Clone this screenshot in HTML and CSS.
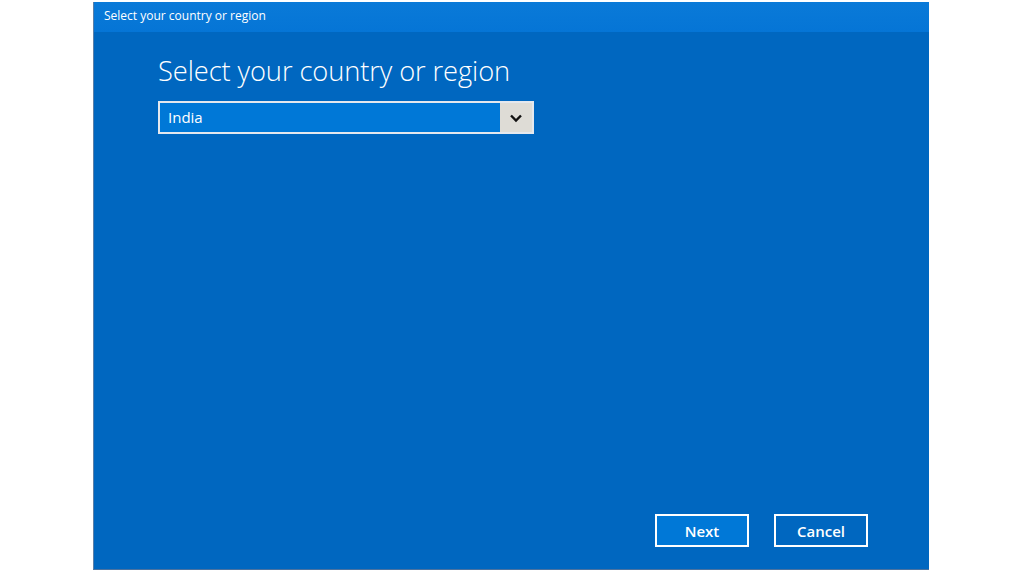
FILE: index.html
```html
<!DOCTYPE html>
<html>
<head>
<meta charset="utf-8">
<link rel="stylesheet" href="styles.css">
</head>
<body>
<div class="stage">
  <div class="window">
    <div class="titlebar">Select your country or region</div>
    <div class="content">
      <h1 class="heading">Select your country or region</h1>
      <div class="select">
        <div class="select-value">India</div>
        <div class="select-arrow">
          <svg width="14" height="10" viewBox="0 0 14 10"><path d="M2 2.5 L7 7.5 L12 2.5" fill="none" stroke="#111" stroke-width="2.4"/></svg>
        </div>
      </div>
      <div class="spacer"></div>
      <div class="actions">
        <button class="btn btn-primary">Next</button>
        <button class="btn">Cancel</button>
      </div>
    </div>
  </div>
</div>
</body>
</html>
```

FILE: styles.css
```css
html, body {
  margin: 0;
  padding: 0;
  background: #ffffff;
  width: 1024px;
  height: 572px;
  overflow: hidden;
  font-family: "Open Sans", "Noto Sans", sans-serif;
}
.stage {
  display: flex;
  justify-content: flex-start;
  padding: 2px 0 0 93px;
  height: 570px;
  box-sizing: border-box;
}
.window {
  width: 836px;
  height: 568px;
  display: flex;
  flex-direction: column;
  background: #0067c0;
  border-left: 1px solid #5b7fa8;
  border-bottom: 1px solid #4a72a0;
  box-sizing: border-box;
}
.titlebar {
  height: 30px;
  background: linear-gradient(#0a7ad8, #0575d6);
  color: #ffffff;
  font-size: 12px;
  line-height: 28px;
  padding-left: 10px;
  flex: none;
}
.content {
  flex: 1;
  display: flex;
  flex-direction: column;
  padding: 20px 61px 22px 64px;
}
.heading {
  margin: 0;
  font-weight: 300;
  font-size: 27.3px;
  line-height: 38px;
  color: #ffffff;
  letter-spacing: -0.1px;
}
.select {
  margin-top: 11px;
  width: 376px;
  height: 33px;
  box-sizing: border-box;
  border: 2px solid #e4e8ee;
  display: flex;
  background: #0078d7;
}
.select-value {
  flex: 1;
  color: #ffffff;
  font-size: 15px;
  line-height: 28px;
  padding-left: 8px;
}
.select-arrow {
  width: 32px;
  background: #dedcd6;
  display: flex;
  align-items: center;
  justify-content: center;
}
.spacer { flex: 1; }
.actions {
  display: flex;
  justify-content: flex-end;
  gap: 25px;
}
.btn {
  width: 94px;
  height: 33px;
  box-sizing: border-box;
  border: 2px solid #ffffff;
  background: #0067c0;
  color: #ffffff;
  font-family: "Open Sans", "Noto Sans", sans-serif;
  font-size: 15px;
  font-weight: 600;
  padding: 0;
}
.btn-primary {
  background: #0078d7;
}
```
